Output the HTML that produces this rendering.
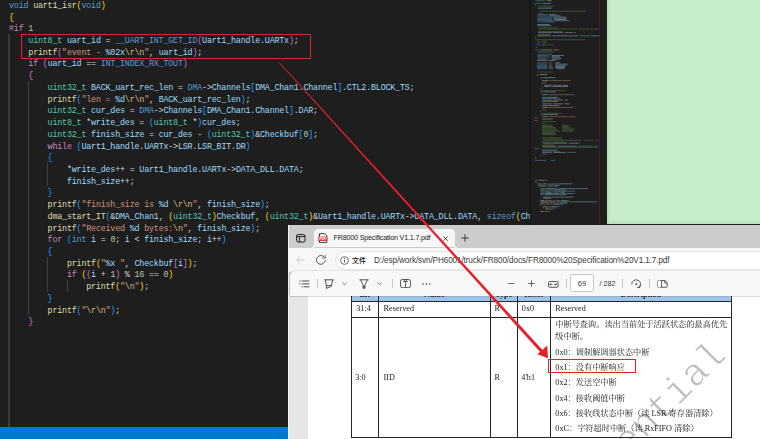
<!DOCTYPE html>
<html lang="zh">
<head>
<meta charset="utf-8">
<title>uart1_isr</title>
<style>
html,body{margin:0;padding:0;}
body{width:760px;height:439px;overflow:hidden;background:#1e1e1e;position:relative;font-family:"Liberation Sans","Noto Sans CJK SC",sans-serif;}
.abs{position:absolute;}
#code{position:absolute;left:9px;top:0.9px;margin:0;width:522px;height:430px;overflow:hidden;
  font-family:"Liberation Mono","DejaVu Sans Mono",monospace;font-size:8.4px;letter-spacing:-0.2px;line-height:11.72px;color:#d4d4d4;white-space:pre;}
#code div{height:11.72px;}
.k{color:#569cd6}.t{color:#4ec9b0}.f{color:#dcdcaa}.v{color:#9cdcfe}.s{color:#ce9178}.n{color:#b5cea8}
.c{color:#c586c0}.e{color:#d7ba7d}.b1{color:#ffd700}.b2{color:#da70d6}.b3{color:#179fff}
.g{position:absolute;width:1px;background:#404040;}
#green{left:606.6px;top:0;width:154px;height:224px;background:#c7edcc;box-shadow:inset 2px -2px 3px rgba(0,0,0,.07);}
#status{left:0;top:426.6px;width:289px;height:13px;background:#007acc;}
#mini{left:531px;top:0;width:68px;height:225px;background:#1e1e1e;box-shadow:-1px 0 2px rgba(0,0,0,.5);}
#miniR{left:599px;top:0;width:7.5px;height:225px;background:#1e1e1e;border-left:1px solid #2b2b2b;box-sizing:border-box;}
#redbox{left:20.9px;top:34.1px;width:290.1px;height:24.6px;border:1.4px solid #e5202a;box-sizing:border-box;}
/* browser */
#bw{left:288.3px;top:224.5px;width:480px;height:220px;background:#cccccc;overflow:hidden;}
#bw .tab{left:25.5px;top:4.8px;width:141px;height:18px;background:#f7f7f7;border-radius:4.5px 4.5px 0 0;}
#bw .nav{left:0;top:23.1px;width:480px;height:24px;background:#f7f7f7;}
#bw .addr{left:47.3px;top:27px;width:460px;height:17.8px;background:#fff;border-radius:9px;box-shadow:0 0 0 0.6px #d8d8d8;}
#bw .ptb{left:1.5px;top:46.5px;width:480px;height:24.5px;background:#f8f8f8;border-top-left-radius:5px;box-shadow:0 0 1.5px rgba(0,0,0,.35);}
#bw .view{left:1px;top:70.6px;width:480px;height:150px;background:#e6e6e6;}
#bw .page{left:20.2px;top:70.6px;width:470px;height:150px;background:#fff;}
.ui{font-family:"Liberation Sans","Noto Sans CJK SC",sans-serif;color:#1b1b1b;white-space:nowrap;}
.pdf{font-family:"Liberation Serif","Noto Serif CJK SC",serif;font-size:8.2px;color:#1c1c1c;white-space:nowrap;line-height:10px;}
.ln{position:absolute;background:#262626;}
.dv{top:278.7px;width:0.8px;height:9.5px;background:#c8c8c8;}
.wm{left:520px;top:330px;font-family:"Liberation Mono",monospace;font-size:38.7px;line-height:40px;color:#cdcdcd;transform-origin:0 0;transform:rotate(-45deg);white-space:nowrap;}
</style>
</head>
<body>
<!-- editor code -->
<div id="code"><div><span class="k">void</span> <span class="f">uart1_isr</span><span class="b1">(</span><span class="k">void</span><span class="b1">)</span></div><div><span class="b1">{</span></div><div><span class="c">#if</span> <span class="n">1</span></div><div>    <span class="t">uint8_t</span> <span class="v">uart_id</span> = <span class="k">__UART_INT_GET_ID</span><span class="b2">(</span><span class="v">Uart1_handle</span>.<span class="v">UARTx</span><span class="b2">)</span>;</div><div>    <span class="f">printf</span><span class="b2">(</span><span class="s">"event - </span><span class="v">%02x</span><span class="e">\r\n</span><span class="s">"</span>, <span class="v">uart_id</span><span class="b2">)</span>;</div><div>    <span class="c">if</span> <span class="b2">(</span><span class="v">uart_id</span> == <span class="k">INT_INDEX_RX_TOUT</span><span class="b2">)</span></div><div>    <span class="b2">{</span></div><div>        <span class="t">uint32_t</span> <span class="v">BACK_uart_rec_len</span> = <span class="k">DMA</span>-><span class="v">Channels</span><span class="b3">[</span><span class="v">DMA_Chan1</span>.<span class="v">Channel</span><span class="b3">]</span>.<span class="v">CTL2</span>.<span class="v">BLOCK_TS</span>;</div><div>        <span class="f">printf</span><span class="b3">(</span><span class="s">"len = </span><span class="v">%d</span><span class="e">\r\n</span><span class="s">"</span>, <span class="v">BACK_uart_rec_len</span><span class="b3">)</span>;</div><div>        <span class="t">uint32_t</span> <span class="v">cur_des</span> = <span class="k">DMA</span>-><span class="v">Channels</span><span class="b3">[</span><span class="v">DMA_Chan1</span>.<span class="v">Channel</span><span class="b3">]</span>.<span class="v">DAR</span>;</div><div>        <span class="t">uint8_t</span> *<span class="v">write_des</span> = <span class="b3">(</span><span class="t">uint8_t</span> *<span class="b3">)</span><span class="v">cur_des</span>;</div><div>        <span class="t">uint32_t</span> <span class="v">finish_size</span> = <span class="v">cur_des</span> - <span class="b3">(</span><span class="t">uint32_t</span><span class="b3">)</span>&amp;<span class="v">Checkbuf</span><span class="b3">[</span><span class="n">0</span><span class="b3">]</span>;</div><div>        <span class="c">while</span> <span class="b3">(</span><span class="v">Uart1_handle</span>.<span class="v">UARTx</span>-><span class="v">LSR</span>.<span class="v">LSR_BIT</span>.<span class="v">DR</span><span class="b3">)</span></div><div>        <span class="b3">{</span></div><div>            *<span class="v">write_des</span>++ = <span class="v">Uart1_handle</span>.<span class="v">UARTx</span>-><span class="v">DATA_DLL</span>.<span class="v">DATA</span>;</div><div>            <span class="v">finish_size</span>++;</div><div>        <span class="b3">}</span></div><div>        <span class="f">printf</span><span class="b3">(</span><span class="s">"finish_size is </span><span class="v">%d</span><span class="s"> </span><span class="e">\r\n</span><span class="s">"</span>, <span class="v">finish_size</span><span class="b3">)</span>;</div><div>        <span class="f">dma_start_IT</span><span class="b3">(</span>&amp;<span class="v">DMA_Chan1</span>, <span class="b1">(</span><span class="t">uint32_t</span><span class="b1">)</span><span class="v">Checkbuf</span>, <span class="b1">(</span><span class="t">uint32_t</span><span class="b1">)</span>&amp;<span class="v">Uart1_handle</span>.<span class="v">UARTx</span>-><span class="v">DATA_DLL</span>.<span class="v">DATA</span>, <span class="k">sizeof</span><span class="b1">(</span><span class="v">Ch</span></div><div>        <span class="f">printf</span><span class="b3">(</span><span class="s">"Received </span><span class="v">%d</span><span class="s"> bytes:</span><span class="e">\n</span><span class="s">"</span>, <span class="v">finish_size</span><span class="b3">)</span>;</div><div>        <span class="c">for</span> <span class="b3">(</span><span class="k">int</span> <span class="v">i</span> = <span class="n">0</span>; <span class="v">i</span> &lt; <span class="v">finish_size</span>; <span class="v">i</span>++<span class="b3">)</span></div><div>        <span class="b3">{</span></div><div>            <span class="f">printf</span><span class="b1">(</span><span class="s">"</span><span class="v">%x</span><span class="s"> "</span>, <span class="v">Checkbuf</span><span class="b2">[</span><span class="v">i</span><span class="b2">]</span><span class="b1">)</span>;</div><div>            <span class="c">if</span> <span class="b1">(</span><span class="b2">(</span><span class="v">i</span> + <span class="n">1</span><span class="b2">)</span> % <span class="n">16</span> == <span class="n">0</span><span class="b1">)</span></div><div>                <span class="f">printf</span><span class="b1">(</span><span class="s">"</span><span class="e">\n</span><span class="s">"</span><span class="b1">)</span>;</div><div>        <span class="b3">}</span></div><div>        <span class="f">printf</span><span class="b3">(</span><span class="s">"</span><span class="e">\r\n</span><span class="s">"</span><span class="b3">)</span>;</div><div>    <span class="b2">}</span></div></div>
<!-- indent guides -->
<div class="g" style="left:8.2px;top:34px;height:393px;width:1.6px;background:#3b3b3b"></div>
<div class="g" style="left:28px;top:81px;height:234.3px"></div>
<div class="g" style="left:47.3px;top:163px;height:23.4px"></div>
<div class="g" style="left:47.3px;top:256.7px;height:35.2px"></div>
<div class="g" style="left:66.6px;top:280.2px;height:11.7px"></div>
<div id="redbox" class="abs"></div>
<div id="status" class="abs"></div>
<div id="mini" class="abs"></div>
<div id="miniR" class="abs"></div>
<!--MINI--><svg class="abs" style="left:0;top:0" width="760" height="226" viewBox="0 0 760 226" shape-rendering="auto"><rect x="535.2" y="0.3" width="9.6" height="0.9" fill="#3f9f8c" opacity="0.6"/><rect x="546.9" y="0.3" width="4.8" height="0.9" fill="#a8a8a8" opacity="0.6"/><rect x="535.2" y="2.9" width="6.1" height="0.9" fill="#4b7fae" opacity="0.6"/><rect x="542.1" y="2.9" width="8.9" height="0.9" fill="#7aaecb" opacity="0.6"/><rect x="535.2" y="4.1" width="0.7" height="0.9" fill="#b0b088" opacity="0.6"/><rect x="538.0" y="5.6" width="16.4" height="0.9" fill="#4f7a45" opacity="0.6"/><rect x="538.0" y="6.8" width="14.3" height="0.9" fill="#4f7a45" opacity="0.6"/><rect x="538.0" y="8.0" width="14.3" height="0.9" fill="#4b7fae" opacity="0.6"/><rect x="538.7" y="10.7" width="47.1" height="0.9" fill="#4f7a45" opacity="0.6"/><rect x="538.7" y="13.0" width="4.1" height="0.9" fill="#4f7a45" opacity="0.6"/><rect x="537.3" y="14.2" width="10.9" height="0.9" fill="#4b7fae" opacity="0.6"/><rect x="548.9" y="14.2" width="7.5" height="0.9" fill="#7aaecb" opacity="0.6"/><rect x="537.3" y="15.4" width="10.9" height="0.9" fill="#4b7fae" opacity="0.6"/><rect x="548.9" y="15.4" width="11.6" height="0.9" fill="#7aaecb" opacity="0.6"/><rect x="537.3" y="16.6" width="15.0" height="0.9" fill="#4b7fae" opacity="0.6"/><rect x="553.0" y="16.6" width="13.0" height="0.9" fill="#7aaecb" opacity="0.6"/><rect x="537.3" y="17.8" width="15.0" height="0.9" fill="#4b7fae" opacity="0.6"/><rect x="553.0" y="17.8" width="13.7" height="0.9" fill="#7aaecb" opacity="0.6"/><rect x="537.3" y="19.0" width="15.0" height="0.9" fill="#4b7fae" opacity="0.6"/><rect x="553.7" y="19.0" width="12.3" height="0.9" fill="#7aaecb" opacity="0.6"/><rect x="537.3" y="20.2" width="15.7" height="0.9" fill="#4b7fae" opacity="0.6"/><rect x="554.4" y="20.2" width="15.0" height="0.9" fill="#7aaecb" opacity="0.6"/><rect x="537.3" y="21.4" width="9.6" height="0.9" fill="#4b7fae" opacity="0.6"/><rect x="547.5" y="21.4" width="6.8" height="0.9" fill="#7aaecb" opacity="0.6"/><rect x="537.3" y="24.0" width="12.3" height="0.9" fill="#7aaecb" opacity="0.6"/><rect x="537.3" y="25.2" width="14.3" height="0.9" fill="#7aaecb" opacity="0.6"/><rect x="538.0" y="27.4" width="19.1" height="0.9" fill="#4f7a45" opacity="0.6"/><rect x="538.0" y="28.6" width="38.9" height="0.9" fill="#4f7a45" opacity="0.6"/><rect x="579.0" y="28.6" width="10.2" height="0.9" fill="#4f7a45" opacity="0.6"/><rect x="590.6" y="28.6" width="8.2" height="0.9" fill="#4f7a45" opacity="0.6"/><rect x="538.0" y="31.0" width="24.6" height="0.9" fill="#4f7a45" opacity="0.6"/><rect x="538.0" y="32.2" width="14.3" height="0.9" fill="#7aaecb" opacity="0.6"/><rect x="553.0" y="32.2" width="10.2" height="0.9" fill="#a8a8a8" opacity="0.6"/><rect x="564.6" y="32.2" width="8.2" height="0.9" fill="#a8a8a8" opacity="0.6"/><rect x="574.2" y="32.2" width="1.4" height="0.9" fill="#a8a8a8" opacity="0.6"/><rect x="538.0" y="34.0" width="11.6" height="0.9" fill="#4f7a45" opacity="0.6"/><rect x="537.3" y="35.4" width="13.7" height="0.9" fill="#b0b088" opacity="0.6"/><rect x="552.3" y="35.4" width="26.0" height="0.9" fill="#7aaecb" opacity="0.6"/><rect x="579.6" y="35.4" width="10.9" height="0.9" fill="#3f9f8c" opacity="0.6"/><rect x="591.3" y="35.4" width="7.5" height="0.9" fill="#7aaecb" opacity="0.6"/><rect x="535.2" y="37.0" width="0.7" height="0.9" fill="#b0b088" opacity="0.6"/><rect x="535.2" y="39.3" width="49.9" height="0.9" fill="#4f7a45" opacity="0.6"/><rect x="537.0" y="40.5" width="1.6" height="0.9" fill="#4b7fae" opacity="0.6"/><rect x="542.1" y="40.5" width="4.8" height="0.9" fill="#4f7a45" opacity="0.6"/><rect x="537.0" y="42.3" width="3.3" height="0.9" fill="#4b7fae" opacity="0.6"/><rect x="542.1" y="42.3" width="4.8" height="0.9" fill="#4f7a45" opacity="0.6"/><rect x="537.0" y="44.4" width="3.3" height="0.9" fill="#4b7fae" opacity="0.6"/><rect x="542.1" y="44.4" width="3.4" height="0.9" fill="#7aaecb" opacity="0.6"/><rect x="546.9" y="44.4" width="6.8" height="0.9" fill="#4f7a45" opacity="0.6"/><rect x="535.9" y="47.0" width="0.8" height="0.9" fill="#b0b088" opacity="0.6"/><rect x="535.2" y="49.5" width="4.1" height="0.9" fill="#4b7fae" opacity="0.6"/><rect x="540.0" y="49.5" width="12.3" height="0.9" fill="#b0b088" opacity="0.6"/><rect x="553.7" y="49.5" width="5.5" height="0.9" fill="#a8a8a8" opacity="0.6"/><rect x="537.3" y="51.6" width="16.4" height="0.9" fill="#4b7fae" opacity="0.6"/><rect x="538.0" y="53.9" width="14.3" height="0.9" fill="#4f7a45" opacity="0.6"/><rect x="537.3" y="55.1" width="9.6" height="0.9" fill="#4b7fae" opacity="0.6"/><rect x="547.5" y="55.1" width="2.0" height="0.9" fill="#6a6a6a" opacity="0.6"/><rect x="551.6" y="55.1" width="12.3" height="0.9" fill="#7aaecb" opacity="0.6"/><rect x="537.3" y="56.3" width="9.6" height="0.9" fill="#4b7fae" opacity="0.6"/><rect x="547.5" y="56.3" width="2.0" height="0.9" fill="#6a6a6a" opacity="0.6"/><rect x="551.6" y="56.3" width="8.2" height="0.9" fill="#7aaecb" opacity="0.6"/><rect x="537.3" y="57.5" width="9.6" height="0.9" fill="#4b7fae" opacity="0.6"/><rect x="547.5" y="57.5" width="2.0" height="0.9" fill="#6a6a6a" opacity="0.6"/><rect x="551.6" y="57.5" width="9.6" height="0.9" fill="#7aaecb" opacity="0.6"/><rect x="537.3" y="58.7" width="9.6" height="0.9" fill="#4b7fae" opacity="0.6"/><rect x="551.6" y="58.7" width="8.9" height="0.9" fill="#7aaecb" opacity="0.6"/><rect x="536.9" y="59.9" width="10.4" height="0.9" fill="#b0b088" opacity="0.6"/><rect x="548.0" y="59.9" width="7.4" height="0.9" fill="#a8a8a8" opacity="0.6"/><rect x="536.9" y="62.4" width="10.4" height="0.9" fill="#4b7fae" opacity="0.6"/><rect x="548.7" y="62.4" width="3.7" height="0.9" fill="#6a6a6a" opacity="0.6"/><rect x="555.4" y="62.4" width="4.4" height="0.9" fill="#7aaecb" opacity="0.6"/><rect x="536.9" y="63.6" width="10.4" height="0.9" fill="#4b7fae" opacity="0.6"/><rect x="548.7" y="63.6" width="3.7" height="0.9" fill="#6a6a6a" opacity="0.6"/><rect x="555.4" y="63.6" width="12.6" height="0.9" fill="#7aaecb" opacity="0.6"/><rect x="536.9" y="64.8" width="10.4" height="0.9" fill="#4b7fae" opacity="0.6"/><rect x="548.7" y="64.8" width="3.7" height="0.9" fill="#6a6a6a" opacity="0.6"/><rect x="555.4" y="64.8" width="11.1" height="0.9" fill="#7aaecb" opacity="0.6"/><rect x="536.9" y="66.0" width="10.4" height="0.9" fill="#4b7fae" opacity="0.6"/><rect x="548.7" y="66.0" width="3.7" height="0.9" fill="#6a6a6a" opacity="0.6"/><rect x="555.4" y="66.0" width="9.6" height="0.9" fill="#7aaecb" opacity="0.6"/><rect x="536.9" y="67.1" width="10.4" height="0.9" fill="#4b7fae" opacity="0.6"/><rect x="548.7" y="67.1" width="4.4" height="0.9" fill="#6a6a6a" opacity="0.6"/><rect x="555.4" y="67.1" width="9.6" height="0.9" fill="#7aaecb" opacity="0.6"/><rect x="536.9" y="68.3" width="10.4" height="0.9" fill="#4b7fae" opacity="0.6"/><rect x="548.7" y="68.3" width="4.4" height="0.9" fill="#6a6a6a" opacity="0.6"/><rect x="556.1" y="68.3" width="8.1" height="0.9" fill="#7aaecb" opacity="0.6"/><rect x="536.9" y="71.6" width="16.3" height="0.9" fill="#4f7a45" opacity="0.6"/><rect x="536.9" y="74.0" width="2.2" height="0.9" fill="#4b7fae" opacity="0.6"/><rect x="539.9" y="74.0" width="7.4" height="0.9" fill="#b0b088" opacity="0.6"/><rect x="536.9" y="75.1" width="0.9" height="0.9" fill="#b0b088" opacity="0.6"/><rect x="540.6" y="77.2" width="1.5" height="0.9" fill="#9a6b98" opacity="0.6"/><rect x="542.8" y="77.2" width="12.6" height="0.9" fill="#7aaecb" opacity="0.6"/><rect x="540.6" y="78.4" width="0.7" height="0.9" fill="#b0b088" opacity="0.6"/><rect x="542.1" y="80.2" width="5.9" height="0.9" fill="#b0b088" opacity="0.6"/><rect x="548.7" y="80.2" width="22.2" height="0.9" fill="#a87560" opacity="0.6"/><rect x="542.1" y="82.4" width="4.4" height="0.9" fill="#9a6b98" opacity="0.6"/><rect x="542.1" y="83.6" width="0.7" height="0.9" fill="#b0b088" opacity="0.6"/><rect x="544.3" y="84.8" width="8.1" height="0.9" fill="#b0b088" opacity="0.6"/><rect x="553.2" y="84.8" width="8.1" height="0.9" fill="#7aaecb" opacity="0.6"/><rect x="562.4" y="84.8" width="5.6" height="0.9" fill="#a8a8a8" opacity="0.6"/><rect x="544.3" y="86.0" width="5.9" height="0.9" fill="#7aaecb" opacity="0.6"/><rect x="551.7" y="86.0" width="16.3" height="0.9" fill="#a8a8a8" opacity="0.6"/><rect x="542.1" y="87.3" width="0.7" height="0.9" fill="#b0b088" opacity="0.6"/><rect x="539.9" y="88.8" width="0.9" height="0.9" fill="#b0b088" opacity="0.6"/><rect x="540.6" y="90.3" width="24.4" height="0.9" fill="#4f7a45" opacity="0.6"/><rect x="540.6" y="91.4" width="1.5" height="0.9" fill="#9a6b98" opacity="0.6"/><rect x="542.8" y="91.4" width="12.6" height="0.9" fill="#7aaecb" opacity="0.6"/><rect x="540.6" y="92.6" width="0.7" height="0.9" fill="#b0b088" opacity="0.6"/><rect x="542.1" y="94.3" width="5.9" height="0.9" fill="#b0b088" opacity="0.6"/><rect x="548.7" y="94.3" width="25.9" height="0.9" fill="#a87560" opacity="0.6"/><rect x="542.1" y="96.9" width="15.6" height="0.9" fill="#7aaecb" opacity="0.6"/><rect x="542.1" y="98.1" width="16.3" height="0.9" fill="#4b7fae" opacity="0.6"/><rect x="559.1" y="98.1" width="0.7" height="0.9" fill="#a8a8a8" opacity="0.6"/><rect x="542.1" y="99.6" width="9.6" height="0.9" fill="#7aaecb" opacity="0.6"/><rect x="553.2" y="99.6" width="9.6" height="0.9" fill="#a8a8a8" opacity="0.6"/><rect x="564.3" y="99.6" width="3.7" height="0.9" fill="#a8a8a8" opacity="0.6"/><rect x="542.1" y="100.8" width="15.6" height="0.9" fill="#b0b088" opacity="0.6"/><rect x="542.1" y="103.4" width="9.6" height="0.9" fill="#7aaecb" opacity="0.6"/><rect x="553.2" y="103.4" width="9.6" height="0.9" fill="#a8a8a8" opacity="0.6"/><rect x="564.3" y="103.4" width="5.2" height="0.9" fill="#a8a8a8" opacity="0.6"/><rect x="542.1" y="105.2" width="17.0" height="0.9" fill="#b0b088" opacity="0.6"/><rect x="542.1" y="107.1" width="5.9" height="0.9" fill="#b0b088" opacity="0.6"/><rect x="548.7" y="107.1" width="24.4" height="0.9" fill="#a87560" opacity="0.6"/><rect x="542.1" y="109.5" width="4.4" height="0.9" fill="#9a6b98" opacity="0.6"/><rect x="539.9" y="111.0" width="0.9" height="0.9" fill="#b0b088" opacity="0.6"/><rect x="540.6" y="112.8" width="20.7" height="0.9" fill="#4f7a45" opacity="0.6"/><rect x="540.6" y="114.1" width="1.5" height="0.9" fill="#9a6b98" opacity="0.6"/><rect x="542.8" y="114.1" width="14.8" height="0.9" fill="#7aaecb" opacity="0.6"/><rect x="540.6" y="115.3" width="0.7" height="0.9" fill="#b0b088" opacity="0.6"/><rect x="542.1" y="116.3" width="5.9" height="0.9" fill="#b0b088" opacity="0.6"/><rect x="548.7" y="116.3" width="26.7" height="0.9" fill="#a87560" opacity="0.6"/><rect x="534.7" y="117.4" width="3.0" height="0.9" fill="#9a6b98" opacity="0.6"/><rect x="542.1" y="118.6" width="10.4" height="0.9" fill="#b0b088" opacity="0.6"/><rect x="534.7" y="120.1" width="3.0" height="0.9" fill="#9a6b98" opacity="0.6"/><rect x="542.1" y="121.1" width="14.1" height="0.9" fill="#4f7a45" opacity="0.6"/><rect x="542.1" y="123.3" width="5.2" height="0.9" fill="#4f7a45" opacity="0.6"/><rect x="542.1" y="124.8" width="10.4" height="0.9" fill="#4f7a45" opacity="0.6"/><rect x="562.1" y="124.8" width="6.7" height="0.9" fill="#4f7a45" opacity="0.6"/><rect x="542.1" y="126.0" width="11.1" height="0.9" fill="#4f7a45" opacity="0.6"/><rect x="562.1" y="126.0" width="5.9" height="0.9" fill="#4f7a45" opacity="0.6"/><rect x="542.1" y="127.2" width="13.3" height="0.9" fill="#4f7a45" opacity="0.6"/><rect x="562.1" y="127.2" width="8.9" height="0.9" fill="#4f7a45" opacity="0.6"/><rect x="542.1" y="128.4" width="14.1" height="0.9" fill="#4f7a45" opacity="0.6"/><rect x="562.1" y="128.4" width="12.6" height="0.9" fill="#4f7a45" opacity="0.6"/><rect x="542.1" y="129.6" width="15.6" height="0.9" fill="#4f7a45" opacity="0.6"/><rect x="562.1" y="129.6" width="11.9" height="0.9" fill="#4f7a45" opacity="0.6"/><rect x="542.1" y="130.7" width="17.8" height="0.9" fill="#4f7a45" opacity="0.6"/><rect x="562.1" y="130.7" width="11.1" height="0.9" fill="#4f7a45" opacity="0.6"/><rect x="542.1" y="131.9" width="12.6" height="0.9" fill="#4f7a45" opacity="0.6"/><rect x="542.1" y="133.1" width="13.3" height="0.9" fill="#4f7a45" opacity="0.6"/><rect x="542.1" y="134.3" width="14.1" height="0.9" fill="#4f7a45" opacity="0.6"/><rect x="542.1" y="137.4" width="19.3" height="0.9" fill="#4f7a45" opacity="0.6"/><rect x="542.8" y="138.6" width="19.3" height="0.9" fill="#4f7a45" opacity="0.6"/><rect x="542.8" y="139.8" width="38.5" height="0.9" fill="#4f7a45" opacity="0.6"/><rect x="584.3" y="139.8" width="8.9" height="0.9" fill="#4f7a45" opacity="0.6"/><rect x="594.7" y="139.8" width="3.0" height="0.9" fill="#4f7a45" opacity="0.6"/><rect x="542.1" y="141.6" width="24.4" height="0.9" fill="#4f7a45" opacity="0.6"/><rect x="542.8" y="142.7" width="8.9" height="0.9" fill="#7aaecb" opacity="0.6"/><rect x="552.4" y="142.7" width="14.8" height="0.9" fill="#a8a8a8" opacity="0.6"/><rect x="568.7" y="142.7" width="9.6" height="0.9" fill="#a8a8a8" opacity="0.6"/><rect x="579.1" y="142.7" width="1.0" height="0.9" fill="#a8a8a8" opacity="0.6"/><rect x="542.1" y="144.5" width="12.6" height="0.9" fill="#4f7a45" opacity="0.6"/><rect x="542.1" y="145.7" width="14.1" height="0.9" fill="#b0b088" opacity="0.6"/><rect x="557.6" y="145.7" width="19.3" height="0.9" fill="#7aaecb" opacity="0.6"/><rect x="578.4" y="145.7" width="14.8" height="0.9" fill="#3f9f8c" opacity="0.6"/><rect x="594.7" y="145.7" width="3.0" height="0.9" fill="#7aaecb" opacity="0.6"/><rect x="542.8" y="146.9" width="54.8" height="0.9" fill="#4f7a45" opacity="0.6"/><rect x="534.7" y="148.2" width="3.7" height="0.9" fill="#9a6b98" opacity="0.6"/><rect x="542.1" y="149.6" width="15.6" height="0.9" fill="#7aaecb" opacity="0.6"/><rect x="542.1" y="150.7" width="16.3" height="0.9" fill="#4b7fae" opacity="0.6"/><rect x="559.1" y="150.7" width="0.7" height="0.9" fill="#a8a8a8" opacity="0.6"/><rect x="542.1" y="151.9" width="9.6" height="0.9" fill="#7aaecb" opacity="0.6"/><rect x="553.2" y="151.9" width="11.9" height="0.9" fill="#a8a8a8" opacity="0.6"/><rect x="566.5" y="151.9" width="9.6" height="0.9" fill="#4b7fae" opacity="0.6"/><rect x="542.1" y="153.7" width="4.4" height="0.9" fill="#9a6b98" opacity="0.6"/><rect x="539.9" y="155.2" width="0.9" height="0.9" fill="#b0b088" opacity="0.6"/><rect x="535.1" y="157.4" width="0.9" height="0.9" fill="#b0b088" opacity="0.6"/><rect x="534.7" y="159.9" width="11.9" height="0.9" fill="#4b7fae" opacity="0.6"/><rect x="551.0" y="159.9" width="4.4" height="0.9" fill="#3f9f8c" opacity="0.6"/><rect x="535.4" y="179.8" width="2.5" height="0.9" fill="#4b7fae" opacity="0.6"/><rect x="538.5" y="179.8" width="5.6" height="0.9" fill="#b0b088" opacity="0.6"/><rect x="544.1" y="179.8" width="0.6" height="0.9" fill="#b0981c" opacity="0.6"/><rect x="544.7" y="179.8" width="2.5" height="0.9" fill="#4b7fae" opacity="0.6"/><rect x="547.2" y="179.8" width="0.6" height="0.9" fill="#b0981c" opacity="0.6"/><rect x="535.4" y="181.0" width="0.6" height="0.9" fill="#b0981c" opacity="0.6"/><rect x="535.4" y="182.2" width="1.9" height="0.9" fill="#9a6b98" opacity="0.6"/><rect x="537.9" y="182.2" width="0.6" height="0.9" fill="#8fa688" opacity="0.6"/><rect x="537.9" y="183.4" width="4.3" height="0.9" fill="#3f9f8c" opacity="0.6"/><rect x="542.8" y="183.4" width="4.3" height="0.9" fill="#7aaecb" opacity="0.6"/><rect x="547.8" y="183.4" width="0.6" height="0.9" fill="#a8a8a8" opacity="0.6"/><rect x="549.0" y="183.4" width="10.5" height="0.9" fill="#4b7fae" opacity="0.6"/><rect x="559.6" y="183.4" width="0.6" height="0.9" fill="#a05aa0" opacity="0.6"/><rect x="560.2" y="183.4" width="7.4" height="0.9" fill="#7aaecb" opacity="0.6"/><rect x="567.6" y="183.4" width="0.6" height="0.9" fill="#a8a8a8" opacity="0.6"/><rect x="568.3" y="183.4" width="3.1" height="0.9" fill="#7aaecb" opacity="0.6"/><rect x="571.4" y="183.4" width="0.6" height="0.9" fill="#a05aa0" opacity="0.6"/><rect x="572.0" y="183.4" width="0.6" height="0.9" fill="#a8a8a8" opacity="0.6"/><rect x="537.9" y="184.6" width="3.7" height="0.9" fill="#b0b088" opacity="0.6"/><rect x="541.6" y="184.6" width="0.6" height="0.9" fill="#a05aa0" opacity="0.6"/><rect x="542.2" y="184.6" width="3.7" height="0.9" fill="#a87560" opacity="0.6"/><rect x="546.6" y="184.6" width="0.6" height="0.9" fill="#a87560" opacity="0.6"/><rect x="547.8" y="184.6" width="2.5" height="0.9" fill="#7aaecb" opacity="0.6"/><rect x="550.3" y="184.6" width="2.5" height="0.9" fill="#a89468" opacity="0.6"/><rect x="552.8" y="184.6" width="0.6" height="0.9" fill="#a87560" opacity="0.6"/><rect x="553.4" y="184.6" width="0.6" height="0.9" fill="#a8a8a8" opacity="0.6"/><rect x="554.6" y="184.6" width="4.3" height="0.9" fill="#7aaecb" opacity="0.6"/><rect x="559.0" y="184.6" width="0.6" height="0.9" fill="#a05aa0" opacity="0.6"/><rect x="559.6" y="184.6" width="0.6" height="0.9" fill="#a8a8a8" opacity="0.6"/><rect x="537.9" y="185.8" width="1.2" height="0.9" fill="#9a6b98" opacity="0.6"/><rect x="539.7" y="185.8" width="0.6" height="0.9" fill="#a05aa0" opacity="0.6"/><rect x="540.4" y="185.8" width="4.3" height="0.9" fill="#7aaecb" opacity="0.6"/><rect x="545.3" y="185.8" width="1.2" height="0.9" fill="#a8a8a8" opacity="0.6"/><rect x="547.2" y="185.8" width="10.5" height="0.9" fill="#4b7fae" opacity="0.6"/><rect x="557.7" y="185.8" width="0.6" height="0.9" fill="#a05aa0" opacity="0.6"/><rect x="537.9" y="187.0" width="0.6" height="0.9" fill="#a05aa0" opacity="0.6"/><rect x="540.4" y="188.2" width="5.0" height="0.9" fill="#3f9f8c" opacity="0.6"/><rect x="545.9" y="188.2" width="10.5" height="0.9" fill="#7aaecb" opacity="0.6"/><rect x="557.1" y="188.2" width="0.6" height="0.9" fill="#a8a8a8" opacity="0.6"/><rect x="558.3" y="188.2" width="1.9" height="0.9" fill="#4b7fae" opacity="0.6"/><rect x="560.2" y="188.2" width="1.2" height="0.9" fill="#a8a8a8" opacity="0.6"/><rect x="561.4" y="188.2" width="5.0" height="0.9" fill="#7aaecb" opacity="0.6"/><rect x="566.4" y="188.2" width="0.6" height="0.9" fill="#2a7ec0" opacity="0.6"/><rect x="567.0" y="188.2" width="5.6" height="0.9" fill="#7aaecb" opacity="0.6"/><rect x="572.6" y="188.2" width="0.6" height="0.9" fill="#a8a8a8" opacity="0.6"/><rect x="573.2" y="188.2" width="4.3" height="0.9" fill="#7aaecb" opacity="0.6"/><rect x="577.6" y="188.2" width="0.6" height="0.9" fill="#2a7ec0" opacity="0.6"/><rect x="578.2" y="188.2" width="0.6" height="0.9" fill="#a8a8a8" opacity="0.6"/><rect x="578.8" y="188.2" width="2.5" height="0.9" fill="#7aaecb" opacity="0.6"/><rect x="581.3" y="188.2" width="0.6" height="0.9" fill="#a8a8a8" opacity="0.6"/><rect x="581.9" y="188.2" width="5.0" height="0.9" fill="#7aaecb" opacity="0.6"/><rect x="586.9" y="188.2" width="0.6" height="0.9" fill="#a8a8a8" opacity="0.6"/><rect x="540.4" y="189.4" width="3.7" height="0.9" fill="#b0b088" opacity="0.6"/><rect x="544.1" y="189.4" width="0.6" height="0.9" fill="#2a7ec0" opacity="0.6"/><rect x="544.7" y="189.4" width="2.5" height="0.9" fill="#a87560" opacity="0.6"/><rect x="547.8" y="189.4" width="0.6" height="0.9" fill="#a87560" opacity="0.6"/><rect x="549.0" y="189.4" width="1.2" height="0.9" fill="#7aaecb" opacity="0.6"/><rect x="550.3" y="189.4" width="2.5" height="0.9" fill="#a89468" opacity="0.6"/><rect x="552.8" y="189.4" width="0.6" height="0.9" fill="#a87560" opacity="0.6"/><rect x="553.4" y="189.4" width="0.6" height="0.9" fill="#a8a8a8" opacity="0.6"/><rect x="554.6" y="189.4" width="10.5" height="0.9" fill="#7aaecb" opacity="0.6"/><rect x="565.2" y="189.4" width="0.6" height="0.9" fill="#2a7ec0" opacity="0.6"/><rect x="565.8" y="189.4" width="0.6" height="0.9" fill="#a8a8a8" opacity="0.6"/><rect x="540.4" y="190.6" width="5.0" height="0.9" fill="#3f9f8c" opacity="0.6"/><rect x="545.9" y="190.6" width="4.3" height="0.9" fill="#7aaecb" opacity="0.6"/><rect x="550.9" y="190.6" width="0.6" height="0.9" fill="#a8a8a8" opacity="0.6"/><rect x="552.1" y="190.6" width="1.9" height="0.9" fill="#4b7fae" opacity="0.6"/><rect x="554.0" y="190.6" width="1.2" height="0.9" fill="#a8a8a8" opacity="0.6"/><rect x="555.2" y="190.6" width="5.0" height="0.9" fill="#7aaecb" opacity="0.6"/><rect x="560.2" y="190.6" width="0.6" height="0.9" fill="#2a7ec0" opacity="0.6"/><rect x="560.8" y="190.6" width="5.6" height="0.9" fill="#7aaecb" opacity="0.6"/><rect x="566.4" y="190.6" width="0.6" height="0.9" fill="#a8a8a8" opacity="0.6"/><rect x="567.0" y="190.6" width="4.3" height="0.9" fill="#7aaecb" opacity="0.6"/><rect x="571.4" y="190.6" width="0.6" height="0.9" fill="#2a7ec0" opacity="0.6"/><rect x="572.0" y="190.6" width="0.6" height="0.9" fill="#a8a8a8" opacity="0.6"/><rect x="572.6" y="190.6" width="1.9" height="0.9" fill="#7aaecb" opacity="0.6"/><rect x="574.5" y="190.6" width="0.6" height="0.9" fill="#a8a8a8" opacity="0.6"/><rect x="540.4" y="191.8" width="4.3" height="0.9" fill="#3f9f8c" opacity="0.6"/><rect x="545.3" y="191.8" width="0.6" height="0.9" fill="#a8a8a8" opacity="0.6"/><rect x="545.9" y="191.8" width="5.6" height="0.9" fill="#7aaecb" opacity="0.6"/><rect x="552.1" y="191.8" width="0.6" height="0.9" fill="#a8a8a8" opacity="0.6"/><rect x="553.4" y="191.8" width="0.6" height="0.9" fill="#2a7ec0" opacity="0.6"/><rect x="554.0" y="191.8" width="4.3" height="0.9" fill="#3f9f8c" opacity="0.6"/><rect x="559.0" y="191.8" width="0.6" height="0.9" fill="#a8a8a8" opacity="0.6"/><rect x="559.6" y="191.8" width="0.6" height="0.9" fill="#2a7ec0" opacity="0.6"/><rect x="560.2" y="191.8" width="4.3" height="0.9" fill="#7aaecb" opacity="0.6"/><rect x="564.5" y="191.8" width="0.6" height="0.9" fill="#a8a8a8" opacity="0.6"/><rect x="540.4" y="193.0" width="5.0" height="0.9" fill="#3f9f8c" opacity="0.6"/><rect x="545.9" y="193.0" width="6.8" height="0.9" fill="#7aaecb" opacity="0.6"/><rect x="553.4" y="193.0" width="0.6" height="0.9" fill="#a8a8a8" opacity="0.6"/><rect x="554.6" y="193.0" width="4.3" height="0.9" fill="#7aaecb" opacity="0.6"/><rect x="559.6" y="193.0" width="0.6" height="0.9" fill="#a8a8a8" opacity="0.6"/><rect x="560.8" y="193.0" width="0.6" height="0.9" fill="#2a7ec0" opacity="0.6"/><rect x="561.4" y="193.0" width="5.0" height="0.9" fill="#3f9f8c" opacity="0.6"/><rect x="566.4" y="193.0" width="0.6" height="0.9" fill="#2a7ec0" opacity="0.6"/><rect x="567.0" y="193.0" width="0.6" height="0.9" fill="#a8a8a8" opacity="0.6"/><rect x="567.6" y="193.0" width="5.0" height="0.9" fill="#7aaecb" opacity="0.6"/><rect x="572.6" y="193.0" width="0.6" height="0.9" fill="#2a7ec0" opacity="0.6"/><rect x="573.2" y="193.0" width="0.6" height="0.9" fill="#8fa688" opacity="0.6"/><rect x="573.8" y="193.0" width="0.6" height="0.9" fill="#2a7ec0" opacity="0.6"/><rect x="574.5" y="193.0" width="0.6" height="0.9" fill="#a8a8a8" opacity="0.6"/><rect x="540.4" y="194.2" width="3.1" height="0.9" fill="#9a6b98" opacity="0.6"/><rect x="544.1" y="194.2" width="0.6" height="0.9" fill="#2a7ec0" opacity="0.6"/><rect x="544.7" y="194.2" width="7.4" height="0.9" fill="#7aaecb" opacity="0.6"/><rect x="552.1" y="194.2" width="0.6" height="0.9" fill="#a8a8a8" opacity="0.6"/><rect x="552.8" y="194.2" width="3.1" height="0.9" fill="#7aaecb" opacity="0.6"/><rect x="555.9" y="194.2" width="1.2" height="0.9" fill="#a8a8a8" opacity="0.6"/><rect x="557.1" y="194.2" width="1.9" height="0.9" fill="#7aaecb" opacity="0.6"/><rect x="559.0" y="194.2" width="0.6" height="0.9" fill="#a8a8a8" opacity="0.6"/><rect x="559.6" y="194.2" width="4.3" height="0.9" fill="#7aaecb" opacity="0.6"/><rect x="563.9" y="194.2" width="0.6" height="0.9" fill="#a8a8a8" opacity="0.6"/><rect x="564.5" y="194.2" width="1.2" height="0.9" fill="#7aaecb" opacity="0.6"/><rect x="565.8" y="194.2" width="0.6" height="0.9" fill="#2a7ec0" opacity="0.6"/><rect x="540.4" y="195.4" width="0.6" height="0.9" fill="#2a7ec0" opacity="0.6"/><rect x="542.8" y="196.6" width="0.6" height="0.9" fill="#a8a8a8" opacity="0.6"/><rect x="543.5" y="196.6" width="5.6" height="0.9" fill="#7aaecb" opacity="0.6"/><rect x="549.0" y="196.6" width="1.2" height="0.9" fill="#a8a8a8" opacity="0.6"/><rect x="550.9" y="196.6" width="0.6" height="0.9" fill="#a8a8a8" opacity="0.6"/><rect x="552.1" y="196.6" width="7.4" height="0.9" fill="#7aaecb" opacity="0.6"/><rect x="559.6" y="196.6" width="0.6" height="0.9" fill="#a8a8a8" opacity="0.6"/><rect x="560.2" y="196.6" width="3.1" height="0.9" fill="#7aaecb" opacity="0.6"/><rect x="563.3" y="196.6" width="1.2" height="0.9" fill="#a8a8a8" opacity="0.6"/><rect x="564.5" y="196.6" width="5.0" height="0.9" fill="#7aaecb" opacity="0.6"/><rect x="569.5" y="196.6" width="0.6" height="0.9" fill="#a8a8a8" opacity="0.6"/><rect x="570.1" y="196.6" width="2.5" height="0.9" fill="#7aaecb" opacity="0.6"/><rect x="572.6" y="196.6" width="0.6" height="0.9" fill="#a8a8a8" opacity="0.6"/><rect x="542.8" y="197.8" width="6.8" height="0.9" fill="#7aaecb" opacity="0.6"/><rect x="549.7" y="197.8" width="1.9" height="0.9" fill="#a8a8a8" opacity="0.6"/><rect x="540.4" y="199.0" width="0.6" height="0.9" fill="#2a7ec0" opacity="0.6"/><rect x="540.4" y="200.2" width="3.7" height="0.9" fill="#b0b088" opacity="0.6"/><rect x="544.1" y="200.2" width="0.6" height="0.9" fill="#2a7ec0" opacity="0.6"/><rect x="544.7" y="200.2" width="7.4" height="0.9" fill="#a87560" opacity="0.6"/><rect x="552.8" y="200.2" width="1.2" height="0.9" fill="#a87560" opacity="0.6"/><rect x="554.6" y="200.2" width="1.2" height="0.9" fill="#7aaecb" opacity="0.6"/><rect x="556.5" y="200.2" width="2.5" height="0.9" fill="#a89468" opacity="0.6"/><rect x="559.0" y="200.2" width="0.6" height="0.9" fill="#a87560" opacity="0.6"/><rect x="559.6" y="200.2" width="0.6" height="0.9" fill="#a8a8a8" opacity="0.6"/><rect x="560.8" y="200.2" width="6.8" height="0.9" fill="#7aaecb" opacity="0.6"/><rect x="567.6" y="200.2" width="0.6" height="0.9" fill="#2a7ec0" opacity="0.6"/><rect x="568.3" y="200.2" width="0.6" height="0.9" fill="#a8a8a8" opacity="0.6"/><rect x="540.4" y="201.4" width="7.4" height="0.9" fill="#b0b088" opacity="0.6"/><rect x="547.8" y="201.4" width="0.6" height="0.9" fill="#2a7ec0" opacity="0.6"/><rect x="548.4" y="201.4" width="0.6" height="0.9" fill="#a8a8a8" opacity="0.6"/><rect x="549.0" y="201.4" width="5.6" height="0.9" fill="#7aaecb" opacity="0.6"/><rect x="554.6" y="201.4" width="0.6" height="0.9" fill="#a8a8a8" opacity="0.6"/><rect x="555.9" y="201.4" width="0.6" height="0.9" fill="#b0981c" opacity="0.6"/><rect x="556.5" y="201.4" width="5.0" height="0.9" fill="#3f9f8c" opacity="0.6"/><rect x="561.4" y="201.4" width="0.6" height="0.9" fill="#b0981c" opacity="0.6"/><rect x="562.1" y="201.4" width="5.0" height="0.9" fill="#7aaecb" opacity="0.6"/><rect x="567.0" y="201.4" width="0.6" height="0.9" fill="#a8a8a8" opacity="0.6"/><rect x="568.3" y="201.4" width="0.6" height="0.9" fill="#b0981c" opacity="0.6"/><rect x="568.9" y="201.4" width="5.0" height="0.9" fill="#3f9f8c" opacity="0.6"/><rect x="573.8" y="201.4" width="0.6" height="0.9" fill="#b0981c" opacity="0.6"/><rect x="574.5" y="201.4" width="0.6" height="0.9" fill="#a8a8a8" opacity="0.6"/><rect x="575.1" y="201.4" width="7.4" height="0.9" fill="#7aaecb" opacity="0.6"/><rect x="582.5" y="201.4" width="0.6" height="0.9" fill="#a8a8a8" opacity="0.6"/><rect x="583.1" y="201.4" width="3.1" height="0.9" fill="#7aaecb" opacity="0.6"/><rect x="586.2" y="201.4" width="1.2" height="0.9" fill="#a8a8a8" opacity="0.6"/><rect x="587.5" y="201.4" width="5.0" height="0.9" fill="#7aaecb" opacity="0.6"/><rect x="592.4" y="201.4" width="0.6" height="0.9" fill="#a8a8a8" opacity="0.6"/><rect x="593.1" y="201.4" width="2.5" height="0.9" fill="#7aaecb" opacity="0.6"/><rect x="595.5" y="201.4" width="0.6" height="0.9" fill="#a8a8a8" opacity="0.6"/><rect x="596.8" y="201.4" width="1.2" height="0.9" fill="#4b7fae" opacity="0.6"/><rect x="540.4" y="202.6" width="3.7" height="0.9" fill="#b0b088" opacity="0.6"/><rect x="544.1" y="202.6" width="0.6" height="0.9" fill="#2a7ec0" opacity="0.6"/><rect x="544.7" y="202.6" width="5.6" height="0.9" fill="#a87560" opacity="0.6"/><rect x="550.9" y="202.6" width="1.2" height="0.9" fill="#7aaecb" opacity="0.6"/><rect x="552.8" y="202.6" width="3.7" height="0.9" fill="#a87560" opacity="0.6"/><rect x="556.5" y="202.6" width="1.2" height="0.9" fill="#a89468" opacity="0.6"/><rect x="557.7" y="202.6" width="0.6" height="0.9" fill="#a87560" opacity="0.6"/><rect x="558.3" y="202.6" width="0.6" height="0.9" fill="#a8a8a8" opacity="0.6"/><rect x="559.6" y="202.6" width="6.8" height="0.9" fill="#7aaecb" opacity="0.6"/><rect x="566.4" y="202.6" width="0.6" height="0.9" fill="#2a7ec0" opacity="0.6"/><rect x="567.0" y="202.6" width="0.6" height="0.9" fill="#a8a8a8" opacity="0.6"/><rect x="540.4" y="203.8" width="1.9" height="0.9" fill="#9a6b98" opacity="0.6"/><rect x="542.8" y="203.8" width="0.6" height="0.9" fill="#2a7ec0" opacity="0.6"/><rect x="543.5" y="203.8" width="1.9" height="0.9" fill="#4b7fae" opacity="0.6"/><rect x="545.9" y="203.8" width="0.6" height="0.9" fill="#7aaecb" opacity="0.6"/><rect x="547.2" y="203.8" width="0.6" height="0.9" fill="#a8a8a8" opacity="0.6"/><rect x="548.4" y="203.8" width="0.6" height="0.9" fill="#8fa688" opacity="0.6"/><rect x="549.0" y="203.8" width="0.6" height="0.9" fill="#a8a8a8" opacity="0.6"/><rect x="550.3" y="203.8" width="0.6" height="0.9" fill="#7aaecb" opacity="0.6"/><rect x="551.5" y="203.8" width="0.6" height="0.9" fill="#a8a8a8" opacity="0.6"/><rect x="552.8" y="203.8" width="6.8" height="0.9" fill="#7aaecb" opacity="0.6"/><rect x="559.6" y="203.8" width="0.6" height="0.9" fill="#a8a8a8" opacity="0.6"/><rect x="560.8" y="203.8" width="0.6" height="0.9" fill="#7aaecb" opacity="0.6"/><rect x="561.4" y="203.8" width="1.2" height="0.9" fill="#a8a8a8" opacity="0.6"/><rect x="562.7" y="203.8" width="0.6" height="0.9" fill="#2a7ec0" opacity="0.6"/><rect x="540.4" y="205.0" width="0.6" height="0.9" fill="#2a7ec0" opacity="0.6"/><rect x="542.8" y="206.2" width="3.7" height="0.9" fill="#b0b088" opacity="0.6"/><rect x="546.6" y="206.2" width="0.6" height="0.9" fill="#b0981c" opacity="0.6"/><rect x="547.2" y="206.2" width="0.6" height="0.9" fill="#a87560" opacity="0.6"/><rect x="547.8" y="206.2" width="1.2" height="0.9" fill="#7aaecb" opacity="0.6"/><rect x="549.7" y="206.2" width="0.6" height="0.9" fill="#a87560" opacity="0.6"/><rect x="550.3" y="206.2" width="0.6" height="0.9" fill="#a8a8a8" opacity="0.6"/><rect x="551.5" y="206.2" width="5.0" height="0.9" fill="#7aaecb" opacity="0.6"/><rect x="556.5" y="206.2" width="0.6" height="0.9" fill="#a05aa0" opacity="0.6"/><rect x="557.1" y="206.2" width="0.6" height="0.9" fill="#7aaecb" opacity="0.6"/><rect x="557.7" y="206.2" width="0.6" height="0.9" fill="#a05aa0" opacity="0.6"/><rect x="558.3" y="206.2" width="0.6" height="0.9" fill="#b0981c" opacity="0.6"/><rect x="559.0" y="206.2" width="0.6" height="0.9" fill="#a8a8a8" opacity="0.6"/><rect x="542.8" y="207.4" width="1.2" height="0.9" fill="#9a6b98" opacity="0.6"/><rect x="544.7" y="207.4" width="0.6" height="0.9" fill="#b0981c" opacity="0.6"/><rect x="545.3" y="207.4" width="0.6" height="0.9" fill="#a05aa0" opacity="0.6"/><rect x="545.9" y="207.4" width="0.6" height="0.9" fill="#7aaecb" opacity="0.6"/><rect x="547.2" y="207.4" width="0.6" height="0.9" fill="#a8a8a8" opacity="0.6"/><rect x="548.4" y="207.4" width="0.6" height="0.9" fill="#8fa688" opacity="0.6"/><rect x="549.0" y="207.4" width="0.6" height="0.9" fill="#a05aa0" opacity="0.6"/><rect x="550.3" y="207.4" width="0.6" height="0.9" fill="#a8a8a8" opacity="0.6"/><rect x="551.5" y="207.4" width="1.2" height="0.9" fill="#8fa688" opacity="0.6"/><rect x="553.4" y="207.4" width="1.2" height="0.9" fill="#a8a8a8" opacity="0.6"/><rect x="555.2" y="207.4" width="0.6" height="0.9" fill="#8fa688" opacity="0.6"/><rect x="555.9" y="207.4" width="0.6" height="0.9" fill="#b0981c" opacity="0.6"/><rect x="545.3" y="208.6" width="3.7" height="0.9" fill="#b0b088" opacity="0.6"/><rect x="549.0" y="208.6" width="0.6" height="0.9" fill="#b0981c" opacity="0.6"/><rect x="549.7" y="208.6" width="0.6" height="0.9" fill="#a87560" opacity="0.6"/><rect x="550.3" y="208.6" width="1.2" height="0.9" fill="#a89468" opacity="0.6"/><rect x="551.5" y="208.6" width="0.6" height="0.9" fill="#a87560" opacity="0.6"/><rect x="552.1" y="208.6" width="0.6" height="0.9" fill="#b0981c" opacity="0.6"/><rect x="552.8" y="208.6" width="0.6" height="0.9" fill="#a8a8a8" opacity="0.6"/><rect x="540.4" y="209.8" width="0.6" height="0.9" fill="#2a7ec0" opacity="0.6"/><rect x="540.4" y="211.0" width="3.7" height="0.9" fill="#b0b088" opacity="0.6"/><rect x="544.1" y="211.0" width="0.6" height="0.9" fill="#2a7ec0" opacity="0.6"/><rect x="544.7" y="211.0" width="0.6" height="0.9" fill="#a87560" opacity="0.6"/><rect x="545.3" y="211.0" width="2.5" height="0.9" fill="#a89468" opacity="0.6"/><rect x="547.8" y="211.0" width="0.6" height="0.9" fill="#a87560" opacity="0.6"/><rect x="548.4" y="211.0" width="0.6" height="0.9" fill="#2a7ec0" opacity="0.6"/><rect x="549.0" y="211.0" width="0.6" height="0.9" fill="#a8a8a8" opacity="0.6"/><rect x="537.9" y="212.2" width="0.6" height="0.9" fill="#a05aa0" opacity="0.6"/></svg><!--/MINI-->
<div id="green" class="abs"></div>
<!-- browser window -->
<div id="bw" class="abs">
  <div class="abs" style="left:0;top:0;width:1px;height:220px;background:#f2f2f2"></div>
  <svg class="abs" style="left:7.5px;top:9px" width="10" height="9" viewBox="0 0 10 9"><rect x="0.6" y="0.6" width="8.4" height="7.4" rx="1.6" fill="none" stroke="#1b1b1b" stroke-width="1"/><path d="M0.6 2.6H9M3.4 2.6V8" stroke="#1b1b1b" stroke-width="0.9" fill="none"/></svg>
  <div class="tab abs"></div>
  <svg class="abs" style="left:29.6px;top:8.2px" width="10" height="10.6" viewBox="0 0 10 10.6"><path d="M1.5 0.7H6.5L8.7 2.9V9.7H1.5Z" fill="#fff" stroke="#333" stroke-width="1" stroke-linejoin="round"/><rect x="0.2" y="3.5" width="9.3" height="4.6" fill="#f03a3f"/><text x="4.85" y="7.1" font-family="Liberation Sans, sans-serif" font-size="3.7" font-weight="bold" fill="#fff" text-anchor="middle">PDF</text></svg>
  <div class="ui abs" style="left:45.2px;top:8.6px;font-size:7.2px;letter-spacing:-0.2px;line-height:9px">FR8000 Specification V1.1.7.pdf</div>
  <svg class="abs" style="left:154.7px;top:11.2px" width="5.2" height="5.2" viewBox="0 0 5.2 5.2"><path d="M0.4 0.4L4.8 4.8M4.8 0.4L0.4 4.8" stroke="#1b1b1b" stroke-width="0.75"/></svg>
  <svg class="abs" style="left:173px;top:9.2px" width="8" height="8" viewBox="0 0 8 8"><path d="M4 0.3V7.7M0.3 4H7.7" stroke="#1b1b1b" stroke-width="0.8"/></svg>
  <div class="abs" style="left:21.5px;top:19.1px;width:4px;height:4px;background:radial-gradient(circle at 0 0,rgba(247,247,247,0) 3.8px,#f7f7f7 4.2px)"></div>
  <div class="abs" style="left:166.5px;top:19.1px;width:4px;height:4px;background:radial-gradient(circle at 100% 0,rgba(247,247,247,0) 3.8px,#f7f7f7 4.2px)"></div>
  <div class="nav abs"></div>
  <svg class="abs" style="left:7.5px;top:31.5px" width="9" height="8" viewBox="0 0 9 8"><path d="M8.6 4H0.8M4 0.6L0.7 4L4 7.4" stroke="#c4c4c4" stroke-width="0.85" fill="none"/></svg>
  <svg class="abs" style="left:28.2px;top:30.2px" width="10" height="10" viewBox="0 0 10 10"><path d="M9.3 5A4.4 4.4 0 1 1 7.9 1.7" stroke="#333" stroke-width="0.8" fill="none"/><path d="M9.2 0.2V3H6.4" stroke="#333" stroke-width="0.8" fill="none"/></svg>
  <div class="addr abs"></div>
  <svg class="abs" style="left:52px;top:31.2px" width="9" height="9" viewBox="0 0 9 9"><circle cx="4.5" cy="4.5" r="3.9" fill="none" stroke="#444" stroke-width="0.75"/><path d="M4.5 3.9V6.6" stroke="#444" stroke-width="0.85"/><circle cx="4.5" cy="2.6" r="0.55" fill="#444"/></svg>
  <div class="ui abs" style="left:63.6px;top:31px;font-size:7px;line-height:10px;font-weight:500;color:#111">文件</div>
  <div class="ui abs" style="left:85.7px;top:31.2px;font-size:8.2px;letter-spacing:-0.12px;line-height:10px;color:#3a3a3a">D:/esp/work/svn/PH6001/truck/FR800/docs/FR8000%20Specification%20V1.1.7.pdf</div>
  <div class="view abs"></div>
  <div class="page abs"></div>
  <div class="ptb abs"></div>
</div>
<!-- pdf toolbar (absolute page coords) -->
<div id="tb" class="abs" style="left:0;top:0;width:760px;height:439px;overflow:hidden;pointer-events:none">
  <svg class="abs" style="left:298.5px;top:279.5px" width="11" height="8" viewBox="0 0 11 8"><path d="M2.6 1H10.4M2.6 3.9H10.4M4.6 6.8H10.4" stroke="#3a3a3a" stroke-width="0.9"/><path d="M0.3 1H1.5M0.3 3.9H1.5M2.3 6.8H3.5" stroke="#3a3a3a" stroke-width="0.9"/></svg>
  <div class="abs dv" style="left:316.6px"></div>
  <svg class="abs" style="left:324px;top:278.5px" width="10" height="10" viewBox="0 0 10 10"><path d="M0.3 0.8H9.7M1.3 0.8L2.4 6.6V9.4L7.2 7.4L8.7 0.8M2.4 6.6H7.4" stroke="#3a3a3a" stroke-width="0.85" fill="none" stroke-linejoin="round"/></svg>
  <svg class="abs" style="left:341.8px;top:282px" width="5" height="3.4" viewBox="0 0 5 3.4"><path d="M0.3 0.4L2.5 2.8L4.7 0.4" stroke="#555" stroke-width="0.7" fill="none"/></svg>
  <svg class="abs" style="left:359px;top:278.5px" width="10" height="10" viewBox="0 0 10 10"><path d="M0.3 0.8H9.7M1.6 0.8L5 8.4L8.4 0.8M3.9 7.4H6.1V9.2H3.9Z" stroke="#3a3a3a" stroke-width="0.85" fill="none" stroke-linejoin="round"/></svg>
  <svg class="abs" style="left:377.1px;top:282px" width="5" height="3.4" viewBox="0 0 5 3.4"><path d="M0.3 0.4L2.5 2.8L4.7 0.4" stroke="#555" stroke-width="0.7" fill="none"/></svg>
  <div class="abs dv" style="left:392px"></div>
  <svg class="abs" style="left:400.3px;top:279px" width="11" height="9.2" viewBox="0 0 11 9.2"><rect x="0.5" y="0.5" width="10" height="8.2" rx="1.8" fill="none" stroke="#3a3a3a" stroke-width="0.85"/><path d="M3 2.6H8M5.5 2.6V8.7M4.6 0.5V2.6M6.4 0.5V2.6" stroke="#3a3a3a" stroke-width="0.75" fill="none"/></svg>
  <svg class="abs" style="left:422.4px;top:282.8px" width="9" height="2" viewBox="0 0 9 2"><circle cx="1" cy="1" r="0.75" fill="#333"/><circle cx="4.4" cy="1" r="0.75" fill="#333"/><circle cx="7.8" cy="1" r="0.75" fill="#333"/></svg>
  <svg class="abs" style="left:508px;top:283.4px" width="7" height="1" viewBox="0 0 7 1"><path d="M0.3 0.5H6.3" stroke="#444" stroke-width="0.8"/></svg>
  <svg class="abs" style="left:528.2px;top:280.4px" width="7" height="7" viewBox="0 0 7 7"><path d="M3.5 0.2V6.8M0.2 3.5H6.8" stroke="#444" stroke-width="0.8"/></svg>
  <svg class="abs" style="left:548.4px;top:280.6px" width="11" height="7" viewBox="0 0 11 7"><rect x="0.5" y="0.5" width="9.6" height="5.8" rx="1.2" fill="none" stroke="#3a3a3a" stroke-width="0.85"/><path d="M2 3.4H4.4M6.2 3.4H8.6" stroke="#3a3a3a" stroke-width="0.8"/><path d="M3 2.2L1.8 3.4L3 4.6M7.6 2.2L8.8 3.4L7.6 4.6" stroke="#3a3a3a" stroke-width="0.7" fill="none"/></svg>
  <div class="abs dv" style="left:566px"></div>
  <div class="abs" style="left:570.3px;top:274.4px;width:23.3px;height:18px;box-sizing:border-box;background:#fff;border:0.8px solid #c6c6c6;border-radius:1.6px"></div>
  <div class="ui abs" style="left:570.3px;top:278.8px;width:23.3px;text-align:center;font-size:7.4px;line-height:10px;color:#333">69</div>
  <div class="ui abs" style="left:599.4px;top:278.8px;font-size:7.2px;line-height:10px;color:#333">/ 282</div>
  <div class="abs dv" style="left:622.1px"></div>
  <svg class="abs" style="left:630.8px;top:279px" width="11" height="10.5" viewBox="0 0 11 10.5"><path d="M0.7 5.3A4.5 4.5 0 1 1 8.4 8.5" stroke="#3a3a3a" stroke-width="0.85" fill="none"/><path d="M8.9 6.3L8.4 8.7L6 8.3" stroke="#3a3a3a" stroke-width="0.8" fill="none"/><circle cx="5.2" cy="5.2" r="0.9" fill="#3a3a3a"/></svg>
  <div class="abs dv" style="left:648.8px"></div>
  <svg class="abs" style="left:657.2px;top:280px" width="11" height="8" viewBox="0 0 11 8"><path d="M4.6 0.5H1.6Q0.5 0.5 0.5 1.6V6.2Q0.5 7.3 1.6 7.3H4.6" stroke="#3a3a3a" stroke-width="0.8" fill="none" stroke-dasharray="1.5 0.9"/><path d="M4.6 0.5H8L10.2 2.7V6.3Q10.2 7.3 9.2 7.3H4.6ZM7.8 0.6V2.9H10.1" stroke="#3a3a3a" stroke-width="0.8" fill="none"/></svg>
</div>
<!-- pdf page content -->
<div id="pdfc" class="abs" style="left:0;top:295.7px;width:760px;height:145px;overflow:hidden">
 <div class="abs" style="left:0;top:-295.7px;width:760px;height:439px;will-change:transform">
  <svg class="abs" style="left:0;top:0" width="760" height="439" viewBox="0 0 760 439"><text transform="translate(528.4 556.1) rotate(-45)" font-family="Liberation Mono, monospace" font-size="39.2" fill="#bdbdbd" stroke="#fff" stroke-width="0.9">Confidential</text></svg>
  <div class="abs" style="left:351.5px;top:294.5px;width:380px;height:6.8px;background:#9dc3e6"></div>
  <div class="pdf abs" style="left:351.5px;width:26.8px;top:289.8px;text-align:center;font-weight:bold">Bit</div>
  <div class="pdf abs" style="left:378.3px;width:112.0px;top:289.8px;text-align:center;font-weight:bold">Name</div>
  <div class="pdf abs" style="left:490.3px;width:26.8px;top:289.8px;text-align:center;font-weight:bold">Type</div>
  <div class="pdf abs" style="left:517.1px;width:33.3px;top:289.8px;text-align:center;font-weight:bold">Reset</div>
  <div class="pdf abs" style="left:550.4px;width:181.2px;top:289.8px;text-align:center;font-weight:bold">Description</div>
  <div class="ln" style="left:351.5px;top:300.8px;width:380.6px;height:0.8px"></div>
  <div class="ln" style="left:351.5px;top:316.9px;width:380.6px;height:0.8px"></div>
  <div class="ln" style="left:351.5px;top:436.8px;width:380.6px;height:0.8px"></div>
  <div class="ln" style="left:351.1px;top:294px;width:0.8px;height:143.6px"></div>
  <div class="ln" style="left:377.9px;top:294px;width:0.8px;height:143.6px"></div>
  <div class="ln" style="left:489.9px;top:294px;width:0.8px;height:143.6px"></div>
  <div class="ln" style="left:516.8px;top:294px;width:0.8px;height:143.6px"></div>
  <div class="ln" style="left:550px;top:294px;width:0.8px;height:143.6px"></div>
  <div class="ln" style="left:731.2px;top:294px;width:0.8px;height:143.6px"></div>
  
  <div class="abs" style="left:289.5px;top:295.6px;width:480px;height:1.6px;background:linear-gradient(rgba(0,0,0,.16),rgba(0,0,0,0))"></div>
  <div class="pdf abs" style="left:356.2px;top:303.8px">31:4</div>
  <div class="pdf abs" style="left:383.6px;top:303.8px">Reserved</div>
  <div class="pdf abs" style="left:494.6px;top:303.8px">R</div>
  <div class="pdf abs" style="left:521.8px;top:303.8px">0x0</div>
  <div class="pdf abs" style="left:555.3px;top:303.8px">Reserved</div>
  <div class="pdf abs" style="left:355.2px;top:372.5px">3:0</div>
  <div class="pdf abs" style="left:383.6px;top:372.5px">IID</div>
  <div class="pdf abs" style="left:494.6px;top:372.5px">R</div>
  <div class="pdf abs" style="left:521.3px;top:372.5px">4'h1</div>
  <div class="pdf abs" style="left:555.3px;top:319.5px">中断号查询。读出当前处于活跃状态的最高优先</div>
  <div class="pdf abs" style="left:555.3px;top:331.6px">级中断。</div>
  <div class="pdf abs" style="left:555.3px;top:347.6px">0x0：调制解调器状态中断</div>
  <div class="pdf abs" style="left:555.3px;top:362.6px">0x1：没有中断响应</div>
  <div class="pdf abs" style="left:555.3px;top:378px">0x2：发送空中断</div>
  <div class="pdf abs" style="left:555.3px;top:393.7px">0x4：接收阈值中断</div>
  <div class="pdf abs" style="left:555.3px;top:408.6px">0x6：接收线状态中断（读 LSR 寄存器清除）</div>
  <div class="pdf abs" style="left:555.3px;top:424.3px">0xC：字符超时中断（读 RxFIFO 清除）</div>
  <div class="abs" style="left:547.5px;top:359px;width:88.8px;height:14.4px;box-sizing:border-box;border:1.2px solid #e5202a"></div>
 </div>
</div>
<!-- red arrow -->
<svg class="abs" style="left:0;top:0" width="760" height="439" viewBox="0 0 760 439"><polygon points="279.3,62.0 544.1,351.7 541.8,353.8 278.7,62.6" fill="#e5202a"/><path d="M548 358.3L537.4 354.3L547.2 345.4Z" fill="#e5202a"/></svg>
</body>
</html>
